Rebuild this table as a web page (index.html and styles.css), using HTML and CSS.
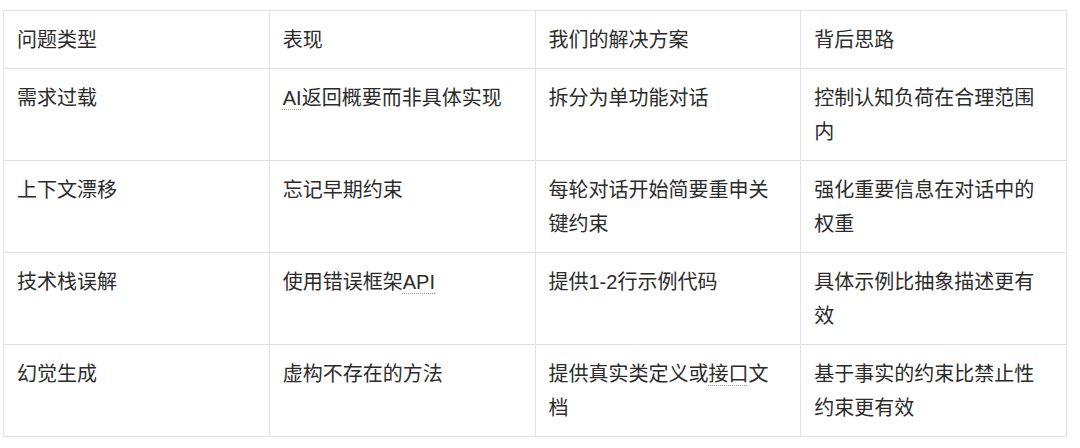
FILE: index.html
```html
<!DOCTYPE html>
<html lang="zh-CN">
<head>
<meta charset="utf-8">
<title>表格</title>
<link rel="stylesheet" href="styles.css">
</head>
<body>
<table class="grid">
  <thead>
    <tr>
      <th>问题类型</th>
      <th>表现</th>
      <th>我们的解决方案</th>
      <th>背后思路</th>
    </tr>
  </thead>
  <tbody>
    <tr>
      <td>需求过载</td>
      <td><span class="dotted">AI</span>返回概要而非具体实现</td>
      <td>拆分为单功能对话</td>
      <td>控制认知负荷在合理范围内</td>
    </tr>
    <tr>
      <td>上下文漂移</td>
      <td>忘记早期约束</td>
      <td>每轮对话开始简要重申关键约束</td>
      <td>强化重要信息在对话中的权重</td>
    </tr>
    <tr>
      <td>技术栈误解</td>
      <td>使用错误框架<span class="dotted">API</span></td>
      <td>提供1-2行示例代码</td>
      <td>具体示例比抽象描述更有效</td>
    </tr>
    <tr>
      <td>幻觉生成</td>
      <td>虚构不存在的方法</td>
      <td>提供真实类定义或<span class="dotted">接口</span>文档</td>
      <td>基于事实的约束比禁止性约束更有效</td>
    </tr>
  </tbody>
</table>
</body>
</html>
```

FILE: styles.css
```css
html, body {
  margin: 0;
  background: #ffffff;
}

body {
  padding: 10px 0 0 3px;
  font-family: "Liberation Sans", "Noto Sans CJK SC", sans-serif;
  font-size: 20px;
  color: #2b2b2b;
}

.grid {
  width: 1064px;
  table-layout: fixed;
  border-collapse: collapse;
}

.grid th,
.grid td {
  border: 1px solid #e2e2e2;
  padding: 12px 16px 11px 13px;
  line-height: 34px;
  text-align: left;
  vertical-align: top;
  font-weight: normal;
}

.dotted {
  text-decoration: underline dotted #9a9a9a;
  text-decoration-thickness: 1px;
  text-underline-offset: 4px;
}
```
